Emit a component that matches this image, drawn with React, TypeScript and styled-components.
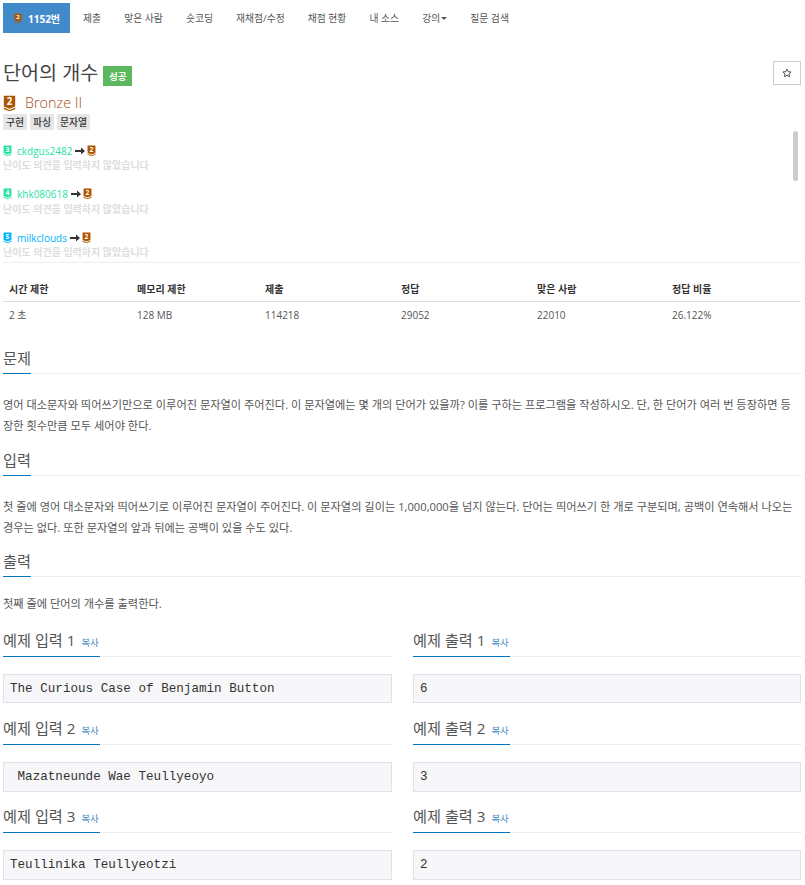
import React from 'react';
import styled, { createGlobalStyle } from 'styled-components';

const Global = createGlobalStyle`
  html, body { margin: 0; padding: 0; background: #fff; }
  body { font-family: "Open Sans", "Noto Sans CJK KR", sans-serif; color: #555; font-size: 11px; overflow: hidden; height: 885px; }
  * { box-sizing: border-box; }
`;

const Page = styled.div`
  width: 805px;
  height: 885px;
  padding: 3px 4px 0 3px;
  overflow: hidden;
`;
const Nav = styled.nav`
  display: flex;
  height: 30px;
`;
const NavItem = styled.a`
  display: flex;
  align-items: center;
  height: 30px;
  padding: 0 11.55px;
  font-size: 9.8px;
  color: #555;
`;
const ActiveNavItem = styled(NavItem)`
  gap: 6px;
  width: 67px;
  margin-right: 1.5px;
  padding: 0 0 0 11px;
  font-size: 10px;
  font-weight: 700;
  color: #fff;
  background: #428bca;
`;
const Caret = styled.span`
  display: inline-block;
  width: 0;
  height: 0;
  margin-left: 1px;
  border-left: 3px solid transparent;
  border-right: 3px solid transparent;
  border-top: 3px solid #555;
`;
const TitleRow = styled.div`
  display: flex;
  align-items: center;
  height: 30px;
  margin-top: 25px;
  gap: 5px;
`;
const Title = styled.h1`
  margin: 0;
  font-size: 19.6px;
  line-height: 28px;
  font-weight: 400;
  color: #444;
`;
const ResultLabel = styled.span`
  display: flex;
  align-items: center;
  justify-content: center;
  width: 29px;
  height: 20px;
  margin-top: 6px;
  background: #5cb85c;
  color: #fff;
  font-size: 9.6px;
  font-weight: 700;
`;
const StarButton = styled.button`
  margin-left: auto;
  width: 28px;
  height: 24px;
  padding: 0;
  background: #fff;
  border: 1px solid #ccc;
  color: #333;
  display: flex;
  align-items: center;
  justify-content: center;
`;
const TierRow = styled.div`
  display: flex;
  align-items: center;
  gap: 9px;
  height: 16px;
  margin-top: 7px;
`;
const TierName = styled.span`
  font-size: 14.4px;
  font-weight: 300;
  color: #a4501a;
  line-height: 16px;
`;
const Tags = styled.div`
  display: flex;
  gap: 3px;
  margin-top: 3px;
`;
const Tag = styled.span`
  display: flex;
  align-items: center;
  height: 16px;
  padding: 0 3px;
  background: #e6e6e6;
  color: #333;
  font-size: 9.8px;
  font-weight: 500;
`;
const VoteBox = styled.div`
  position: relative;
  height: 132px;
  margin-top: 1px;
  padding-top: 12px;
  overflow: hidden;
  border-bottom: 1px solid #eee;
`;
const Scrollbar = styled.div`
  position: absolute;
  right: 3px;
  top: 0;
  width: 5px;
  height: 50px;
  border-radius: 3px;
  background: #ccc;
`;
const Vote = styled.div`
  height: 43.5px;
`;
const VoteLine = styled.div`
  display: flex;
  align-items: center;
  gap: 2px;
  height: 15px;
  font-size: 10px;
`;
const VoteUser = styled.span<{ $color: string }>`
  color: ${p => p.$color};
  margin-left: 3px;
`;
const Arrow = styled.svg`
  width: 10px;
  height: 8px;
  margin-left: 1px;
`;
const VoteNote = styled.div`
  font-size: 10px;
  line-height: 15px;
  font-weight: 700;
  color: #ddd;
`;
const InfoTable = styled.table`
  width: 798px;
  margin-top: 11px;
  border-collapse: collapse;
  table-layout: fixed;
`;
const Th = styled.th<{ $w: number }>`
  width: ${p => p.$w}px;
  height: 27px;
  padding: 3px 6px 0;
  text-align: left;
  font-size: 10px;
  font-weight: 700;
  color: #333;
  border-bottom: 1px solid #ddd;
`;
const Td = styled.td`
  height: 26px;
  padding: 1px 6px 0;
  font-size: 10px;
  color: #555;
`;
const SectionHead = styled.div<{ $mt: number }>`
  margin-top: ${p => p.$mt}px;
  border-bottom: 1px dotted #ddd;
  height: 27px;
  display: flex;
`;
const HeadText = styled.h2`
  margin: 0 0 -1px;
  height: 27px;
  font-size: 15.2px;
  line-height: 22px;
  font-weight: 400;
  color: #555;
  border-bottom: 1px solid #0076c0;
  white-space: nowrap;
`;
const Copy = styled.a`
  font-size: 9.4px;
  color: #428bca;
  margin-left: 2px;
`;
const Body = styled.p<{ $mt?: number }>`
  margin: ${p => p.$mt ?? 20}px 0 0;
  font-size: 11.2px;
  line-height: 21px;
  color: #555;
`;
const Samples = styled.div`
  display: grid;
  grid-template-columns: 389px 388px;
  grid-auto-rows: 88px;
  column-gap: 21px;
  margin-top: 16px;
`;
const SampleCell = styled.div`
  display: flex;
  flex-direction: column;
`;
const SampleHeadText = styled(HeadText)`
  width: 97px;
  line-height: 20px;
`;
const Pre = styled.pre<{ $tall?: boolean }>`
  margin: 17px 0 0;
  height: ${p => (p.$tall ? 30 : 29)}px;
  padding: 0 6px;
  background: #f7f7f9;
  border: 1px solid #e1e1e8;
  font-family: "Liberation Mono", "DejaVu Sans Mono", monospace;
  font-size: 12.6px;
  line-height: 28px;
  color: #333;
  white-space: pre;
`;

const Tier = ({ n, c, size = 12 }: { n: number; c: string; size?: number }) => (
  <svg width={size} height={size * 1.25} viewBox="0 0 16 20" style={{ flex: 'none' }}>
    <path d="M1 1h14v13l-7 3-7-3z" fill={c} />
    <path d="M1 15.5l7 3 7-3v2l-7 2.5-7-2.5z" fill={c} />
    <text x="8" y="12.5" textAnchor="middle" fontSize="12" fontWeight="700" fill="#fff" fontFamily="Open Sans, sans-serif">{n}</text>
  </svg>
);

const votes = [
  { n: 3, c: '#27e2a4', u: 'ckdgus2482' },
  { n: 4, c: '#27e2a4', u: 'khk080618' },
  { n: 5, c: '#00b4fc', u: 'milkclouds' },
];

const samples = [
  ['The Curious Case of Benjamin Button', '6', false],
  [' Mazatneunde Wae Teullyeoyo', '3', true],
  ['Teullinika Teullyeotzi', '2', true],
] as const;

export default function App() {
  return (
    <Page>
      <Global />
      <Nav>
        <ActiveNavItem><Tier n={2} c="#ad5600" size={8} />1152번</ActiveNavItem>
        <NavItem>제출</NavItem>
        <NavItem>맞은 사람</NavItem>
        <NavItem>숏코딩</NavItem>
        <NavItem>재채점/수정</NavItem>
        <NavItem>채점 현황</NavItem>
        <NavItem>내 소스</NavItem>
        <NavItem>강의<Caret /></NavItem>
        <NavItem>질문 검색</NavItem>
      </Nav>
      <TitleRow>
        <Title>단어의 개수</Title>
        <ResultLabel>성공</ResultLabel>
        <StarButton>
          <svg width="10" height="10" viewBox="0 0 24 24" fill="none" stroke="#333" strokeWidth="2">
            <path d="M12 2.5l2.9 6.2 6.8.8-5 4.7 1.3 6.7-6-3.4-6 3.4 1.3-6.7-5-4.7 6.8-.8z" />
          </svg>
        </StarButton>
      </TitleRow>
      <TierRow>
        <Tier n={2} c="#ad5600" size={13} />
        <TierName>Bronze II</TierName>
      </TierRow>
      <Tags>
        <Tag>구현</Tag>
        <Tag>파싱</Tag>
        <Tag>문자열</Tag>
      </Tags>
      <VoteBox>
        <Scrollbar />
        {votes.map(v => (
          <Vote key={v.u}>
            <VoteLine>
              <Tier n={v.n} c={v.c} size={9} />
              <VoteUser $color={v.c}>{v.u}</VoteUser>
              <Arrow viewBox="0 0 10 8">
                <path d="M0 3h6V0.5L10 4 6 7.5V5H0z" fill="#333" />
              </Arrow>
              <Tier n={2} c="#ad5600" size={9} />
            </VoteLine>
            <VoteNote>난이도 의견을 입력하지 않았습니다</VoteNote>
          </Vote>
        ))}
      </VoteBox>
      <InfoTable>
        <thead>
          <tr>
            <Th $w={128}>시간 제한</Th>
            <Th $w={128}>메모리 제한</Th>
            <Th $w={136}>제출</Th>
            <Th $w={136}>정답</Th>
            <Th $w={135}>맞은 사람</Th>
            <Th $w={135}>정답 비율</Th>
          </tr>
        </thead>
        <tbody>
          <tr>
            <Td>2 초</Td>
            <Td>128 MB</Td>
            <Td>114218</Td>
            <Td>29052</Td>
            <Td>22010</Td>
            <Td>26.122%</Td>
          </tr>
        </tbody>
      </InfoTable>
      <SectionHead $mt={20}><HeadText>문제</HeadText></SectionHead>
      <Body>영어 대소문자와 띄어쓰기만으로 이루어진 문자열이 주어진다. 이 문자열에는 몇 개의 단어가 있을까? 이를 구하는 프로그램을 작성하시오. 단, 한 단어가 여러 번 등장하면 등장한 횟수만큼 모두 세어야 한다.</Body>
      <SectionHead $mt={13}><HeadText>입력</HeadText></SectionHead>
      <Body>첫 줄에 영어 대소문자와 띄어쓰기로 이루어진 문자열이 주어진다. 이 문자열의 길이는 1,000,000을 넘지 않는다. 단어는 띄어쓰기 한 개로 구분되며, 공백이 연속해서 나오는 경우는 없다. 또한 문자열의 앞과 뒤에는 공백이 있을 수도 있다.</Body>
      <SectionHead $mt={12}><HeadText>출력</HeadText></SectionHead>
      <Body $mt={16}>첫째 줄에 단어의 개수를 출력한다.</Body>
      <Samples>
        {samples.map((s, i) => (
          <React.Fragment key={i}>
            <SampleCell>
              <SectionHead $mt={0}><SampleHeadText>예제 입력 {i + 1} <Copy>복사</Copy></SampleHeadText></SectionHead>
              <Pre $tall={s[2]}>{s[0]}</Pre>
            </SampleCell>
            <SampleCell>
              <SectionHead $mt={0}><SampleHeadText>예제 출력 {i + 1} <Copy>복사</Copy></SampleHeadText></SectionHead>
              <Pre $tall={s[2]}>{s[1]}</Pre>
            </SampleCell>
          </React.Fragment>
        ))}
      </Samples>
    </Page>
  );
}
